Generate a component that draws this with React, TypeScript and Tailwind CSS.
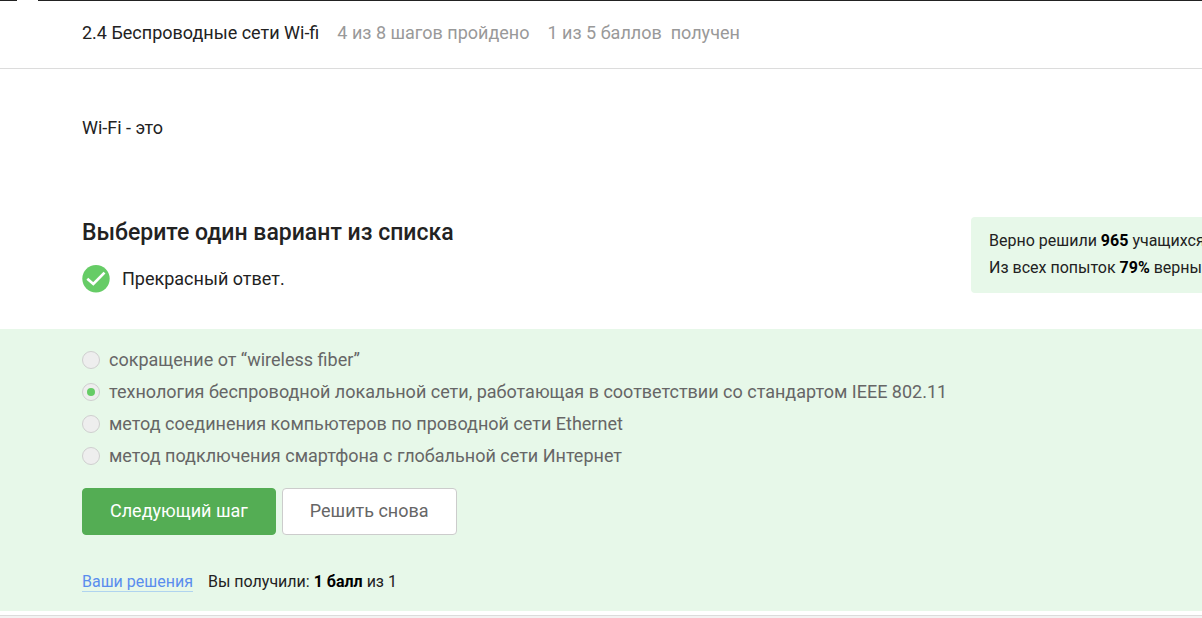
import { useState } from 'react';

const options = [
  'сокращение от “wireless fiber”',
  'технология беспроводной локальной сети, работающая в соответствии со стандартом IEEE 802.11',
  'метод соединения компьютеров по проводной сети Ethernet',
  'метод подключения смартфона с глобальной сети Интернет',
];

function LessonHeader() {
  return (
    <>
      <div className="flex h-px">
        <div className="w-[17px] bg-[#222]" />
        <div className="ml-[21px] flex-1 bg-[#222]" />
      </div>
      <header className="flex items-center gap-[18px] border-b border-[#dcdcdc] pt-5 pb-[23px] pl-[82px] text-lg leading-6 whitespace-nowrap text-[#999]">
        <h1 className="text-[#222]">2.4 Беспроводные сети Wi-fi</h1>
        <span>4 из 8 шагов пройдено</span>
        <span className="whitespace-pre">1 из 5 баллов  получен</span>
      </header>
    </>
  );
}

function CheckIcon() {
  return (
    <svg viewBox="0 0 28 28" className="size-7 shrink-0" aria-hidden="true">
      <circle cx="14" cy="13.7" r="13.7" fill="#66cc66" />
      <path d="M5.3 13.8 L11.3 19 L22.5 7.6" fill="none" stroke="#fff" strokeWidth="2.7" />
    </svg>
  );
}

function Stats() {
  return (
    <aside className="w-[231px] shrink-0 overflow-hidden rounded-l bg-[#e7f8e9] pt-[10px] pb-3 pl-[18px] text-base leading-[27px] whitespace-nowrap text-[#222]">
      <p>
        Верно решили <b className="font-bold text-black">965</b> учащихся
      </p>
      <p>
        Из всех попыток <b className="font-bold text-black">79%</b> верных
      </p>
    </aside>
  );
}

export default function App() {
  const [selected, setSelected] = useState(1);

  return (
    <div className="min-h-screen overflow-hidden bg-white font-['Roboto','Liberation_Sans',sans-serif]">
      <LessonHeader />
      <main>
        <p className="pt-[47px] pl-[82px] text-lg leading-6 text-[#222]">Wi-Fi - это</p>

        <section className="mt-[77px] flex items-start justify-between pb-9 pl-[82px]">
          <div>
            <h2 className="text-[23px] leading-8 font-medium text-[#222]">
              Выберите один вариант из списка
            </h2>
            <div className="mt-4 flex items-center gap-3 text-lg leading-7 text-[#222]">
              <CheckIcon />
              <p>Прекрасный ответ.</p>
            </div>
          </div>
          <Stats />
        </section>

        <form
          className="bg-[#e7f8e9] pt-[15px] pb-[17px] pl-[82px]"
          onSubmit={(event) => event.preventDefault()}
        >
          <fieldset className="text-lg leading-8 text-[#666]">
            {options.map((option, index) => (
              <label key={option} className="flex items-center gap-[9px]">
                <input
                  type="radio"
                  name="answer"
                  checked={selected === index}
                  onChange={() => setSelected(index)}
                  className="grid size-[18px] shrink-0 appearance-none place-items-center rounded-full border border-[#cfcfcf] bg-[#eee] checked:before:size-2 checked:before:rounded-full checked:before:bg-[#66cc66] checked:before:content-['']"
                />
                {option}
              </label>
            ))}
          </fieldset>

          <div className="mt-4 flex gap-[6px] text-lg leading-6">
            <button
              type="submit"
              className="rounded border border-[#54ad54] bg-[#54ad54] px-[27px] pt-[10px] pb-[11px] text-white"
            >
              Следующий шаг
            </button>
            <button
              type="button"
              className="rounded border border-[#ccc] bg-white px-[27px] pt-[10px] pb-[11px] text-[#666]"
            >
              Решить снова
            </button>
          </div>

          <div className="mt-[35px] flex gap-[15px] text-base leading-6 text-[#222]">
            <a
              href="#solutions"
              className="text-[#5a8dee] underline decoration-[#b0d4ef] decoration-1 underline-offset-4"
            >
              Ваши решения
            </a>
            <p>
              Вы получили: <b className="font-bold text-black">1 балл</b> из 1
            </p>
          </div>
        </form>
      </main>
      <footer className="mt-1 h-4 border-t border-[#dcdcdc] bg-[#f3f3f3]" />
    </div>
  );
}
